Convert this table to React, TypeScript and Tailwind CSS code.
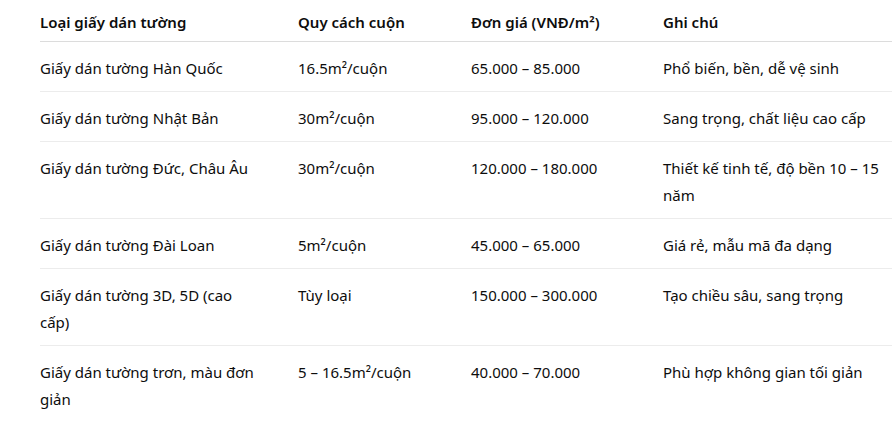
import React from 'react';

const rows = [
  ['Giấy dán tường Hàn Quốc', '16.5m²/cuộn', '65.000 – 85.000', 'Phổ biến, bền, dễ vệ sinh'],
  ['Giấy dán tường Nhật Bản', '30m²/cuộn', '95.000 – 120.000', 'Sang trọng, chất liệu cao cấp'],
  ['Giấy dán tường Đức, Châu Âu', '30m²/cuộn', '120.000 – 180.000', 'Thiết kế tinh tế, độ bền 10 – 15 năm'],
  ['Giấy dán tường Đài Loan', '5m²/cuộn', '45.000 – 65.000', 'Giá rẻ, mẫu mã đa dạng'],
  ['Giấy dán tường 3D, 5D (cao cấp)', 'Tùy loại', '150.000 – 300.000', 'Tạo chiều sâu, sang trọng'],
  ['Giấy dán tường trơn, màu đơn giản', '5 – 16.5m²/cuộn', '40.000 – 70.000', 'Phù hợp không gian tối giản'],
];

export default function App() {
  return (
    <div className="w-[892px] h-[429px] overflow-hidden bg-white pl-10 font-['Segoe_UI','Noto_Sans',sans-serif] text-[15px] leading-[27px] text-[#0d0d0d]">
      <table className="w-[880px] table-fixed border-collapse text-left">
        <colgroup>
          <col className="w-[258px]" />
          <col className="w-[173px]" />
          <col className="w-[192px]" />
          <col />
        </colgroup>
        <thead>
          <tr className="border-b border-[#dcdcdc]">
            <th className="pt-[9px] pb-[5px] pr-10 font-semibold">Loại giấy dán tường</th>
            <th className="pt-[9px] pb-[5px] pr-4 font-semibold">Quy cách cuộn</th>
            <th className="pt-[9px] pb-[5px] pr-4 font-semibold">Đơn giá (VNĐ/m²)</th>
            <th className="pt-[9px] pb-[5px] pr-10 font-semibold">Ghi chú</th>
          </tr>
        </thead>
        <tbody>
          {rows.map((r, i) => (
            <tr key={i} className="border-b border-[#ececec] last:border-b-0 align-top">
              <td className="pt-[13px] pb-[9px] pr-10">{r[0]}</td>
              <td className="pt-[13px] pb-[9px] pr-4">{r[1]}</td>
              <td className="pt-[13px] pb-[9px] pr-4">{r[2]}</td>
              <td className="pt-[13px] pb-[9px] pr-10">{r[3]}</td>
            </tr>
          ))}
        </tbody>
      </table>
    </div>
  );
}
